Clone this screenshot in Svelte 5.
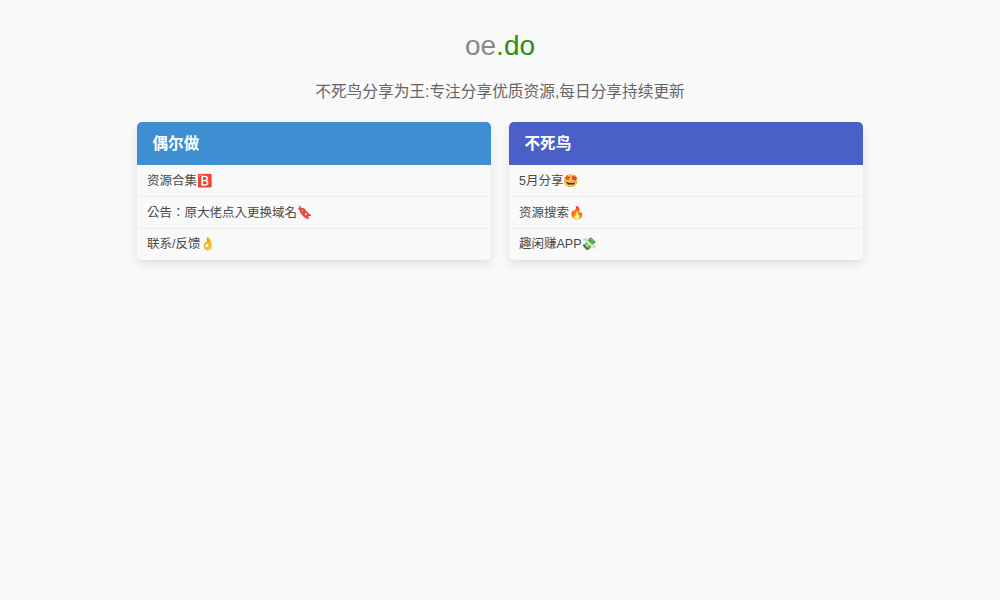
<script>
  const cards = [
    { title: '偶尔做', cls: 'blue', items: [
      { text: '资源合集🅱️' },
      { text: '公告：原大佬点入更换域名🔖', notice: true },
      { text: '联系/反馈👌' }
    ] },
    { title: '不死鸟', cls: 'indigo', items: [
      { text: '5月分享🤩' },
      { text: '资源搜索🔥' },
      { text: '趣闲赚APP💸' }
    ] }
  ];
</script>

<div class="page">
  <h1><span class="oe">oe</span><span class="do">.do</span></h1>
  <p class="sub">不死鸟分享为王:专注分享优质资源,每日分享持续更新</p>
  <div class="grid">
    {#each cards as c}
      <section class="card">
        <h2 class={c.cls}>{c.title}</h2>
        <ul>
          {#each c.items as it}
            <li class:notice={it.notice}>{it.text}</li>
          {/each}
        </ul>
      </section>
    {/each}
  </div>
</div>

<style>
  :global(body) {
    margin: 0;
    background: #f9f9f9;
    font-family: "Liberation Sans", "Noto Sans CJK SC", "Noto Color Emoji", sans-serif;
    color: #444;
  }
  .page {
    min-height: 600px;
    box-sizing: border-box;
    padding-top: 27px;
    display: flex;
    flex-direction: column;
    align-items: center;
  }
  h1 {
    margin: 0;
    font-size: 28px;
    font-weight: 400;
    line-height: 38px;
  }
  .oe { color: #888; }
  .do { color: #2a9010; }
  .sub {
    margin: 16px 0 0;
    font-size: 15.7px;
    line-height: 22px;
    color: #666;
  }
  .grid {
    margin-top: 19px;
    display: grid;
    grid-template-columns: 354px 354px;
    gap: 18px;
  }
  .card {
    border-radius: 5px;
    overflow: hidden;
    background: #f9f9f9;
    box-shadow: 0 4px 10px rgba(0, 0, 0, 0.1);
  }
  h2 {
    margin: 0;
    height: 43px;
    padding-left: 15.5px;
    font-size: 15.6px;
    font-weight: 700;
    line-height: 43px;
    color: #fff;
  }
  .blue { background: #3f8ed1; }
  .indigo { background: #4a60c8; }
  ul {
    margin: 0;
    padding: 0;
    list-style: none;
  }
  li {
    height: 32px;
    box-sizing: border-box;
    padding-left: 10px;
    font-size: 12.5px;
    line-height: 32px;
    border-bottom: 1px solid #eeeeee;
    color: #4a4a4a;
  }
  li.notice {
    font-family: "Liberation Sans", "Noto Sans CJK TC", "Noto Color Emoji", sans-serif;
  }
  li:last-child {
    height: 31px;
    line-height: 31px;
    border-bottom: 0;
  }
</style>
